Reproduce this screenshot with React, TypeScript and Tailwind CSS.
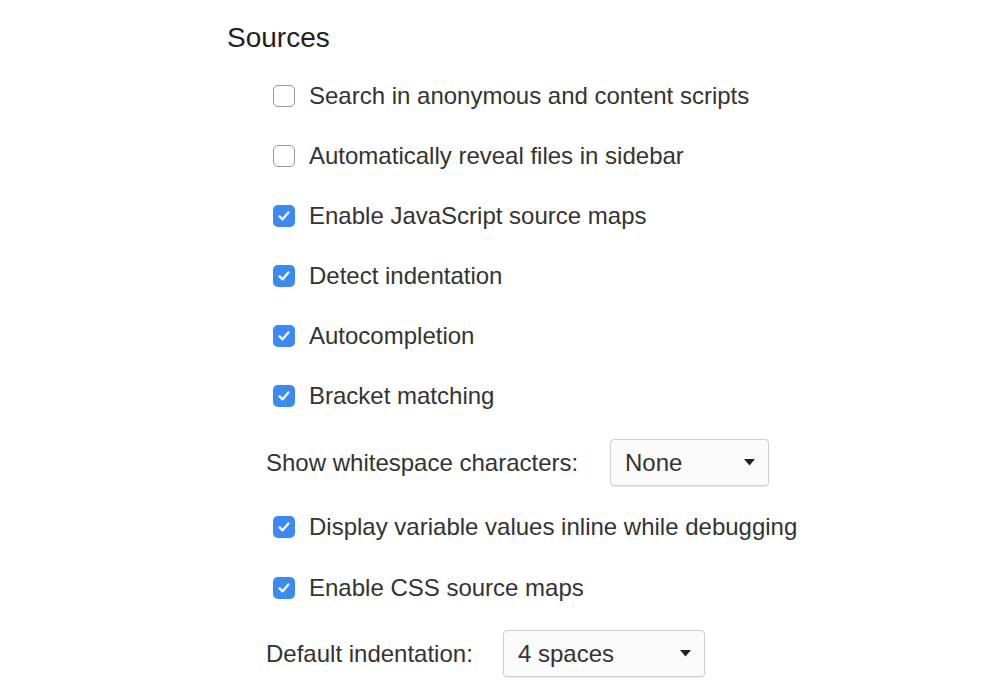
type Row =
  | { kind: "check"; label: string; checked: boolean; mt: string }
  | { kind: "select"; label: string; value: string; labelW: string; selW: string; mt: string };

const rows: Row[] = [
  { kind: "check", label: "Search in anonymous and content scripts", checked: false, mt: "mt-[30px]" },
  { kind: "check", label: "Automatically reveal files in sidebar", checked: false, mt: "mt-[36px]" },
  { kind: "check", label: "Enable JavaScript source maps", checked: true, mt: "mt-[36px]" },
  { kind: "check", label: "Detect indentation", checked: true, mt: "mt-[36px]" },
  { kind: "check", label: "Autocompletion", checked: true, mt: "mt-[36px]" },
  { kind: "check", label: "Bracket matching", checked: true, mt: "mt-[36px]" },
  { kind: "select", label: "Show whitespace characters:", value: "None", labelW: "w-[344px]", selW: "w-[159px]", mt: "mt-[31px]" },
  { kind: "check", label: "Display variable values inline while debugging", checked: true, mt: "mt-[29px]" },
  { kind: "check", label: "Enable CSS source maps", checked: true, mt: "mt-[37px]" },
  { kind: "select", label: "Default indentation:", value: "4 spaces", labelW: "w-[237px]", selW: "w-[202px]", mt: "mt-[30px]" },
];

function Checkbox({ checked }: { checked: boolean }) {
  if (!checked) {
    return <span className="w-[22px] h-[22px] rounded-[5px] border-[1.5px] border-[#9a9a9a] bg-white shrink-0" />;
  }
  return (
    <span className="w-[22px] h-[22px] rounded-[5px] bg-[#3b89f5] shrink-0 flex items-center justify-center">
      <svg width="16" height="16" viewBox="0 0 16 16" fill="none">
        <path d="M3.6 8.4 L6.6 11.3 L12.4 4.4" stroke="white" strokeWidth="2.3" strokeLinecap="round" strokeLinejoin="round" />
      </svg>
    </span>
  );
}

export default function App() {
  return (
    <div className="w-[1006px] h-[682px] bg-white overflow-hidden text-[#333] font-['Liberation_Sans',Arial,sans-serif]">
      <div className="pl-[227px] pt-[22px]">
        <h1 className="text-[28px] leading-[32px] text-[#222]">Sources</h1>
        <div className="flex flex-col">
          {rows.map((r) =>
            r.kind === "check" ? (
              <div key={r.label} className={`flex items-center gap-[14px] pl-[46px] h-[24px] ${r.mt}`}>
                <Checkbox checked={r.checked} />
                <span className="text-[24px] leading-[24px] whitespace-nowrap">{r.label}</span>
              </div>
            ) : (
              <div key={r.label} className={`flex items-center pl-[39px] h-[47px] ${r.mt}`}>
                <span className={`text-[24px] leading-[24px] whitespace-nowrap ${r.labelW}`}>{r.label}</span>
                <div className={`h-[47px] ${r.selW} rounded-[4px] border border-[#cfcfcf] bg-[#fbfbfb] flex items-center justify-between pl-[14px] pr-[13px] shadow-[0_1px_1px_rgba(0,0,0,0.08)]`}>
                  <span className="text-[24px] leading-[24px] whitespace-nowrap">{r.value}</span>
                  <svg width="11" height="7" viewBox="0 0 11 7">
                    <path d="M0 0 H11 L5.5 6.5 Z" fill="#222" />
                  </svg>
                </div>
              </div>
            )
          )}
        </div>
      </div>
    </div>
  );
}
